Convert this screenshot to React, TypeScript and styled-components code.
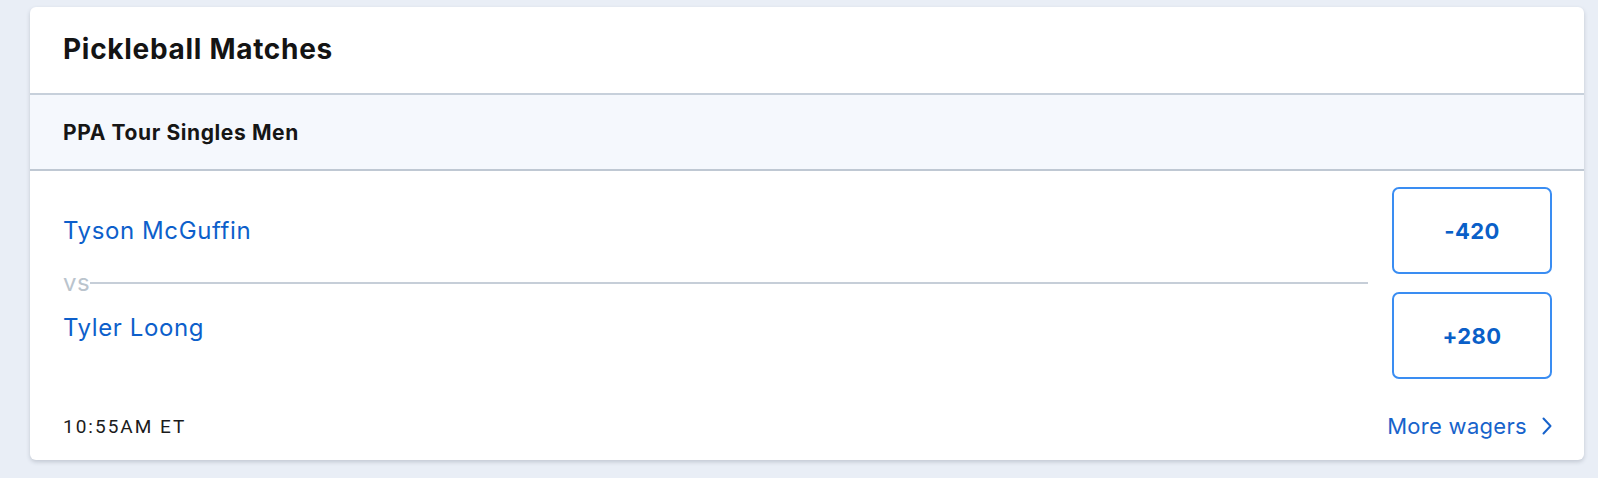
import React from "react";
import styled, { createGlobalStyle } from "styled-components";

const GlobalStyle = createGlobalStyle`
  html, body {
    margin: 0;
    padding: 0;
    background: #e9eef6;
  }
  body {
    font-family: "Inter", "Liberation Sans", sans-serif;
  }
`;

const Page = styled.div`
  padding: 7px 14px 20px 30px;
`;

const Card = styled.section`
  background: #ffffff;
  border-radius: 6px;
  box-shadow: 0 2px 4px rgba(40, 50, 70, 0.2);
  overflow: hidden;
`;

const Header = styled.header`
  height: 88px;
  display: flex;
  align-items: center;
  padding: 0 33px 2px;
  border-bottom: 2px solid #c7d0db;
  box-sizing: border-box;
`;

const Title = styled.h1`
  margin: 0;
  font-size: 28px;
  font-weight: 700;
  letter-spacing: 0.7px;
  color: #141414;
`;

const SubHeader = styled.div`
  height: 76px;
  display: flex;
  align-items: center;
  padding: 0 33px;
  background: #f5f8fd;
  border-bottom: 2px solid #bfc8d3;
  box-sizing: border-box;
`;

const SubTitle = styled.h2`
  margin: 0;
  font-size: 21px;
  font-weight: 700;
  letter-spacing: 0.6px;
  color: #161616;
`;

const Body = styled.div`
  padding: 16px 32px 0 33px;
  display: flex;
  gap: 24px;
`;

const Teams = styled.div`
  flex: 1;
  display: flex;
  flex-direction: column;
`;

const TeamRow = styled.div<{ $h: number }>`
  height: ${(p) => p.$h}px;
  display: flex;
  align-items: center;
`;

const TeamName = styled.a`
  font-size: 24px;
  letter-spacing: 0.6px;
  color: #0d5fcb;
  text-decoration: none;
`;

const VsRow = styled.div`
  height: 18px;
  display: flex;
  align-items: center;
`;

const Vs = styled.span`
  font-size: 24px;
  letter-spacing: 0.5px;
  color: #bac4cd;
  line-height: 1;
`;

const VsLine = styled.div`
  flex: 1;
  height: 2px;
  background: #c6ced8;
`;

const Odds = styled.div`
  width: 160px;
  display: flex;
  flex-direction: column;
  gap: 18px;
`;

const OddsButton = styled.button`
  height: 87px;
  box-sizing: border-box;
  border: 2px solid #3a8df2;
  border-radius: 7px;
  background: #ffffff;
  font-family: "Inter", "Liberation Sans", sans-serif;
  font-size: 22px;
  font-weight: 700;
  letter-spacing: 0.4px;
  color: #0a5fc8;
  cursor: pointer;
`;

const Footer = styled.div`
  display: flex;
  align-items: center;
  justify-content: space-between;
  padding: 34px 32px 21px 33px;
`;

const Time = styled.span`
  font-family: "Roboto", "Liberation Sans", sans-serif;
  font-size: 19px;
  letter-spacing: 2px;
  color: #1b1b1b;
`;

const MoreLink = styled.a`
  display: flex;
  align-items: center;
  gap: 15px;
  font-size: 22px;
  letter-spacing: 0.3px;
  color: #1763cb;
  text-decoration: none;
`;

export default function App() {
  return (
    <>
      <GlobalStyle />
      <Page>
        <Card>
          <Header>
            <Title>Pickleball Matches</Title>
          </Header>
          <SubHeader>
            <SubTitle>PPA Tour Singles Men</SubTitle>
          </SubHeader>
          <Body>
            <Teams>
              <TeamRow $h={87}>
                <TeamName href="#">Tyson McGuffin</TeamName>
              </TeamRow>
              <VsRow>
                <Vs>vs</Vs>
                <VsLine />
              </VsRow>
              <TeamRow $h={70}>
                <TeamName href="#">Tyler Loong</TeamName>
              </TeamRow>
            </Teams>
            <Odds>
              <OddsButton>-420</OddsButton>
              <OddsButton>+280</OddsButton>
            </Odds>
          </Body>
          <Footer>
            <Time>10:55AM ET</Time>
            <MoreLink href="#">
              More wagers
              <svg width="10" height="18" viewBox="0 0 10 18" fill="none">
                <path d="M1.5 1.5 L8.5 9 L1.5 16.5" stroke="#1763cb" strokeWidth="2" strokeLinecap="round" strokeLinejoin="round" />
              </svg>
            </MoreLink>
          </Footer>
        </Card>
      </Page>
    </>
  );
}
